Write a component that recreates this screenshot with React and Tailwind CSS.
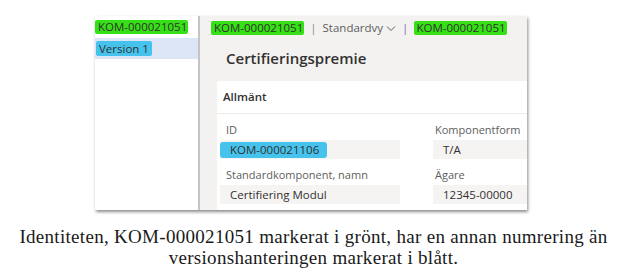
import React from "react";

const ui = { fontFamily: '"Open Sans", "Noto Sans", sans-serif' };

const Green = ({ children, className = "" }) => (
  <span className={`bg-[#36e016] rounded-[2px] whitespace-nowrap ${className}`}>{children}</span>
);

const Field = ({ label, value, hl, pad }) => (
  <div className="flex flex-col">
    <div className={`text-[11px] leading-[16px] text-[#605e5c] whitespace-nowrap ${pad}`}>{label}</div>
    <div className="mt-[2px] h-[19px] bg-[#f5f4f3] flex items-center">
      {hl ? (
        <span className="bg-[#45c3ec] rounded-[3px] pl-[10px] pr-[8px] text-[11.5px] leading-[16px] text-[#323130]">
          {value}
        </span>
      ) : (
        <span className="pl-[10px] text-[11.5px] leading-[16px] text-[#323130] whitespace-nowrap">{value}</span>
      )}
    </div>
  </div>
);

export default function App() {
  return (
    <div className="w-[627px] h-[272px] bg-white overflow-hidden">
      <div className="pt-[16px] pl-[95px]">
        <div
          className="w-[432px] h-[194px] flex shadow-[1px_2px_3px_rgba(0,0,0,0.45)] overflow-hidden"
          style={ui}
        >
          {/* left list */}
          <div className="w-[103px] shrink-0 bg-white pt-[2px]">
            <div className="h-[18px] flex items-center">
              <Green className="text-[11.5px] leading-[14px] text-[#323130] pl-[3px] pr-[1px]">KOM-000021051</Green>
            </div>
            <div className="mt-[2px] h-[21px] bg-[#dce6f7] flex items-center pl-[1px]">
              <span className="bg-[#45c3ec] rounded-[2px] px-[3px] text-[11.5px] leading-[15px] text-[#323130]">
                Version 1
              </span>
            </div>
          </div>
          <div className="w-[2px] shrink-0 bg-[#c4c4c4]" />
          {/* right detail */}
          <div className="flex-1 bg-[#f3f2f1] flex flex-col min-w-0">
            <div className="pl-[11px] pt-[3px] h-[21px] flex items-center whitespace-nowrap text-[11.5px] leading-[14px] text-[#605e5c]">
              <Green className="text-[#323130] pl-[3px] pr-[1px]">KOM-000021051</Green>
              <span className="mx-[6px] text-[#8a8886]">|</span>
              <span>Standardvy</span>
              <svg width="10" height="7" viewBox="0 0 10 7" className="ml-[3px]" fill="none" stroke="#605e5c" strokeWidth="1">
                <path d="M1 1.5 L5 5.5 L9 1.5" />
              </svg>
              <span className="mx-[6px] text-[#8764b8]">|</span>
              <Green className="text-[#323130] pl-[2px] pr-[1px]">KOM-000021051</Green>
            </div>
            <div className="pl-[26px] mt-[11px] text-[15px] leading-[20px] font-semibold text-[#323130]">
              Certifieringspremie
            </div>
            <div className="ml-[17px] mt-[13px] flex-1 bg-white rounded-tl-[3px]">
              <div className="h-[33px] border-b border-[#edebe9] flex items-center pl-[6px] text-[11.5px] font-semibold text-[#323130]">
                Allmänt
              </div>
              <div className="grid grid-cols-[180px_1fr] gap-x-[33px] gap-y-[8px] pl-[3px] pt-[8px]">
                <Field label="ID" pad="pl-[6px]" value="KOM-000021106" hl />
                <Field label="Komponentform" pad="pl-[2px]" value="T/A" />
                <Field label="Standardkomponent, namn" pad="pl-[6px]" value="Certifiering Modul" />
                <Field label="Ägare" pad="pl-[2px]" value="12345-00000" />
              </div>
            </div>
          </div>
        </div>
      </div>
      <div
        className="mt-[16px] text-center text-[19px] leading-[21px] text-[#1a1a1a] tracking-[0.3px]"
        style={{ fontFamily: '"Liberation Serif", serif' }}
      >
        Identiteten, KOM-000021051 markerat i grönt, har en annan numrering än
        <br />
        versionshanteringen markerat i blått.
      </div>
    </div>
  );
}
